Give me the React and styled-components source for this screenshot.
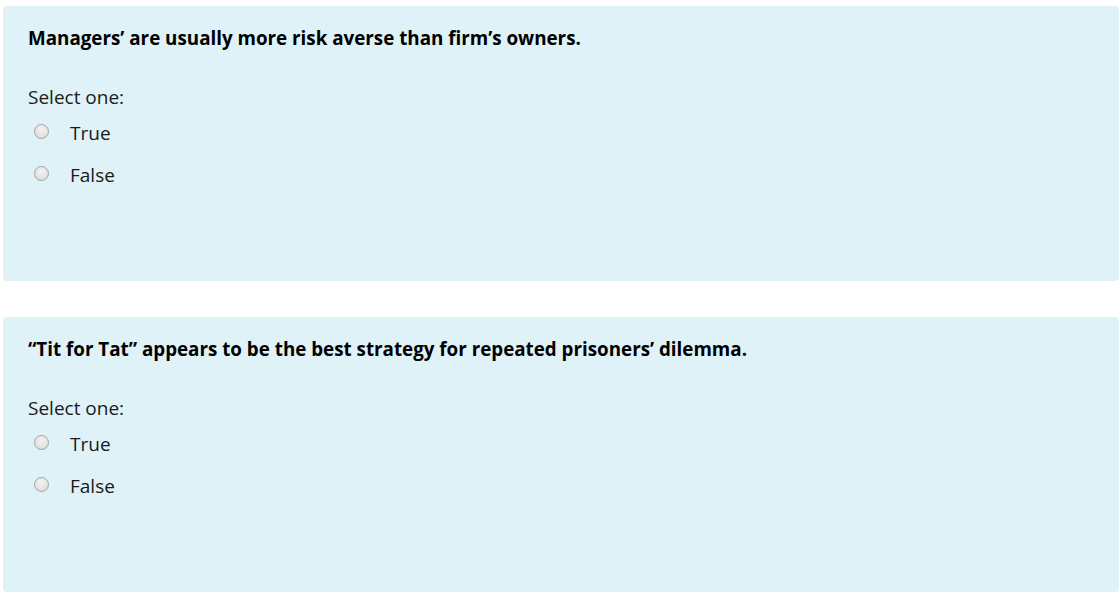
import React from "react";
import styled, { createGlobalStyle } from "styled-components";

const Global = createGlobalStyle`
  html, body { margin: 0; padding: 0; background: #fff; }
  body { font-family: "Segoe UI", "Open Sans", "Noto Sans", sans-serif; color: #1d2125; }
`;

const Page = styled.div`
  display: flex;
  flex-direction: column;
  gap: 36px;
  padding: 6px 1px 0 3px;
`;

const Card = styled.div`
  background: #def2f8;
  border-radius: 4px;
  height: 275px;
  box-sizing: border-box;
  padding: 20px 25px 0;
`;

const Question = styled.div`
  font-weight: 700;
  font-size: 18.8px;
  line-height: 24px;
  color: #000;
  margin-bottom: 35px;
`;

const Prompt = styled.div`
  font-size: 19px;
  line-height: 24px;
  color: #1a1a1a;
  margin-bottom: 12px;
`;

const Options = styled.div`
  display: flex;
  flex-direction: column;
  gap: 18px;
`;

const Option = styled.label`
  display: flex;
  align-items: center;
  font-size: 19px;
  line-height: 24px;
  color: #1a1a1a;
`;

const Radio = styled.span`
  width: 15px;
  height: 15px;
  border-radius: 50%;
  box-sizing: border-box;
  border: 1px solid #a3a3a3;
  background: radial-gradient(circle at 50% 35%, #f3f3f3 0%, #e3e3e3 60%, #d3d3d3 100%);
  margin-left: 6px;
  margin-right: 21px;
  margin-top: -3px;
  flex-shrink: 0;
`;

const questions = [
  "Managers\u2019 are usually more risk averse than firm\u2019s owners.",
  "\u201CTit for Tat\u201D appears to be the best strategy for repeated prisoners\u2019 dilemma.",
];

export default function App() {
  return (
    <>
      <Global />
      <Page>
        {questions.map((q) => (
          <Card key={q}>
            <Question>{q}</Question>
            <Prompt>Select one:</Prompt>
            <Options>
              <Option>
                <Radio />
                True
              </Option>
              <Option>
                <Radio />
                False
              </Option>
            </Options>
          </Card>
        ))}
      </Page>
    </>
  );
}
